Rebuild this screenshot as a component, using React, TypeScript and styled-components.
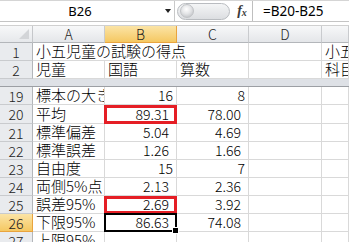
import React from 'react'
import styled, { createGlobalStyle, css } from 'styled-components'

const GlobalStyle = createGlobalStyle`
	html, body {
		margin: 0;
		padding: 0;
		background: #fff;
	}
	body {
		overflow: hidden;
		font-family: "Noto Sans CJK JP", "Noto Sans", sans-serif;
		color: #000;
	}
`

const COLS = '33px 72px 72px 72px 73px 1fr'

type Mark = 'red' | 'active'

interface CellData {
	text?: string;
	num?: boolean;
	pad?: number;
	mark?: Mark;
}

interface RowData {
	no: number;
	h: number;
	active?: boolean;
	cells: CellData[];
}

const n = (text: string, pad = 7, mark?: Mark): CellData => ({ text, num: true, pad, mark })
const t = (text: string): CellData => ({ text })

const rows: RowData[] = [
	{ no: 19, h: 18, cells: [t('標本の大きさ'), n('16', 3), n('8', 3), t(''), t('')] },
	{ no: 20, h: 19, cells: [t('平均'), n('89.31', 7, 'red'), n('78.00'), t(''), t('')] },
	{ no: 21, h: 18, cells: [t('標準偏差'), n('5.04'), n('4.69'), t(''), t('')] },
	{ no: 22, h: 18, cells: [t('標準誤差'), n('1.26'), n('1.66'), t(''), t('')] },
	{ no: 23, h: 18, cells: [t('自由度'), n('15', 3), n('7', 3), t(''), t('')] },
	{ no: 24, h: 18, cells: [t('両側5%点'), n('2.13'), n('2.36'), t(''), t('')] },
	{ no: 25, h: 18, cells: [t('誤差95%'), n('2.69', 7, 'red'), n('3.92'), t(''), t('')] },
	{ no: 26, h: 18, active: true, cells: [t('下限95%'), n('86.63', 7, 'active'), n('74.08'), t(''), t('')] },
	{ no: 27, h: 18, cells: [t('上限95%'), t(''), t(''), t(''), t('')] },
]

export default function App() {
	return (
		<>
			<GlobalStyle />
			<Window>
				<FormulaBar>
					<NameBox>
						<NameText>B26</NameText>
						<DropArrow />
					</NameBox>
					<GripArea>
						<Grip>
							<GripKnob />
						</Grip>
					</GripArea>
					<FxButton>
						<i>f</i><i>x</i>
					</FxButton>
					<FormulaInput>=B20-B25</FormulaInput>
				</FormulaBar>
				<Sheet>
					<GridRow $h={17}>
						<Corner>
							<CornerTriangle />
						</Corner>
						<ColHeader>A</ColHeader>
						<ColHeader $active>B</ColHeader>
						<ColHeader>C</ColHeader>
						<ColHeader>D</ColHeader>
						<ColHeader />
					</GridRow>

					<GridRow $h={18}>
						<RowHeader>1</RowHeader>
						<Cell $span={3}>小五児童の試験の得点</Cell>
						<Cell />
						<Cell>小五児童の試験の得点</Cell>
					</GridRow>
					<GridRow $h={18}>
						<RowHeader>2</RowHeader>
						<Cell>児童</Cell>
						<Cell>国語</Cell>
						<Cell>算数</Cell>
						<Cell />
						<Cell>科目</Cell>
					</GridRow>

					<FreezeBand />

					{rows.map((r) => (
						<GridRow key={r.no} $h={r.h}>
							<RowHeader $active={r.active}>{r.no}</RowHeader>
							{r.cells.map((c, i) => (
								<Cell key={i} $num={c.num} $pad={c.pad} $mark={c.mark}>
									{c.text}
								</Cell>
							))}
						</GridRow>
					))}
				</Sheet>
			</Window>
		</>
	)
}

const Window = styled.div`
	width: 349px;
	height: 242px;
	overflow: hidden;
	display: flex;
	flex-direction: column;
`

const FormulaBar = styled.div`
	display: flex;
	height: 22px;
	border-top: 1px solid #d5d5d5;
	border-bottom: 1px solid #c4c4c4;
	box-sizing: border-box;
	background: #fff;
	flex-shrink: 0;
`

const NameBox = styled.div`
	position: relative;
	width: 175px;
	display: flex;
	align-items: center;
	border-right: 1px solid #c9c9c9;
	box-sizing: border-box;
`

const NameText = styled.span`
	width: 160px;
	text-align: center;
	font-family: "Noto Sans", sans-serif;
	font-size: 13px;
	line-height: 1;
`

const DropArrow = styled.span`
	width: 0;
	height: 0;
	border-left: 3.5px solid transparent;
	border-right: 3.5px solid transparent;
	border-top: 4px solid #222;
	margin-left: 5px;
`

const GripArea = styled.div`
	width: 57px;
	display: flex;
	align-items: center;
	padding-left: 2px;
	box-sizing: border-box;
`

const Grip = styled.div`
	width: 53px;
	height: 17px;
	border-radius: 9px;
	border: 1px solid #b9bcc0;
	background: linear-gradient(#f4f5f6, #dcdee1);
	display: flex;
	align-items: center;
	padding-left: 2px;
	box-sizing: border-box;
`

const GripKnob = styled.div`
	width: 12px;
	height: 12px;
	border-radius: 50%;
	background: radial-gradient(circle at 45% 35%, #ffffff 0%, #e4e5e7 45%, #b4b7bb 100%);
	border: 1px solid #c1c3c6;
`

const FxButton = styled.div`
	width: 20px;
	display: flex;
	align-items: center;
	justify-content: center;
	border-right: 1px solid #bfbfbf;
	font-family: "Liberation Serif", serif;
	font-weight: bold;
	font-size: 14px;
	color: #3a3a3a;

	i:last-child {
		font-size: 10px;
		margin-top: 3px;
	}
`

const FormulaInput = styled.div`
	flex: 1;
	display: flex;
	align-items: center;
	padding-left: 10px;
	font-family: "Noto Sans", sans-serif;
	font-size: 13.5px;
	white-space: nowrap;
`

const Sheet = styled.div`
	margin-top: 3px;
	border-top: 1px solid #d0d0d0;
	flex: 1;
	overflow: hidden;
`

const GridRow = styled.div<{ $h: number }>`
	display: grid;
	grid-template-columns: ${COLS};
	height: ${(p) => p.$h}px;
`

const headerBase = css`
	display: flex;
	align-items: center;
	justify-content: center;
	font-family: "Noto Sans CJK JP", sans-serif;
	font-weight: 300;
	font-size: 14px;
	line-height: 1;
	box-sizing: border-box;
	color: #222;
`

const activeHeader = css`
	background: linear-gradient(#fbe4a6, #f5c862);
	border-right-color: #e9a43e;
	border-bottom-color: #e9a43e;
`

const Corner = styled.div`
	position: relative;
	background: linear-gradient(#f7f8f9, #e6e8eb);
	border-right: 1px solid #c5c7ca;
	border-bottom: 1px solid #b3b6ba;
	box-sizing: border-box;
`

const CornerTriangle = styled.div`
	position: absolute;
	right: 3px;
	bottom: 3px;
	width: 0;
	height: 0;
	border-left: 10px solid transparent;
	border-bottom: 10px solid #d3d5d8;
`

const ColHeader = styled.div<{ $active?: boolean }>`
	${headerBase};
	background: linear-gradient(#f7f8f9, #e4e6e9);
	border-right: 1px solid #c9cbce;
	border-bottom: 1px solid #b3b6ba;
	${(p) => p.$active && activeHeader};
`

const RowHeader = styled.div<{ $active?: boolean }>`
	${headerBase};
	background: #e9ebee;
	border-right: 1px solid #b3b6ba;
	border-bottom: 1px solid #c9cbce;
	${(p) => p.$active && activeHeader};
`

const FreezeBand = styled.div`
	height: 7px;
	background: #dee1e6;
	border-bottom: 1px solid #9c9fa4;
`

const markStyle = {
	red: css`
		&::after {
			content: '';
			position: absolute;
			left: -1px;
			top: 0;
			right: -1px;
			bottom: -1px;
			border: 3px solid #e51e25;
		}
	`,
	active: css`
		&::after {
			content: '';
			position: absolute;
			left: -1px;
			top: -1px;
			right: -1px;
			bottom: -1px;
			border: 2px solid #000;
		}
		&::before {
			content: '';
			position: absolute;
			right: -3px;
			bottom: -3px;
			width: 5px;
			height: 5px;
			background: #000;
			border: 1px solid #fff;
			z-index: 2;
		}
	`,
}

const Cell = styled.div<{ $num?: boolean; $pad?: number; $mark?: Mark; $span?: number }>`
	position: relative;
	display: flex;
	align-items: flex-end;
	justify-content: ${(p) => (p.$num ? 'flex-end' : 'flex-start')};
	padding: 0 ${(p) => p.$pad ?? 0}px 2px ${(p) => (p.$num ? 0 : 3)}px;
	border-right: 1px solid #d9d9d9;
	border-bottom: 1px solid #d9d9d9;
	box-sizing: border-box;
	white-space: nowrap;
	overflow: hidden;
	font-size: ${(p) => (p.$num ? 14 : 15)}px;
	font-weight: 300;
	line-height: 1;
	${(p) => p.$span && `grid-column: span ${p.$span};`}
	${(p) => p.$mark && `overflow: visible; z-index: 1;`}
	${(p) => p.$mark && markStyle[p.$mark]};
`
